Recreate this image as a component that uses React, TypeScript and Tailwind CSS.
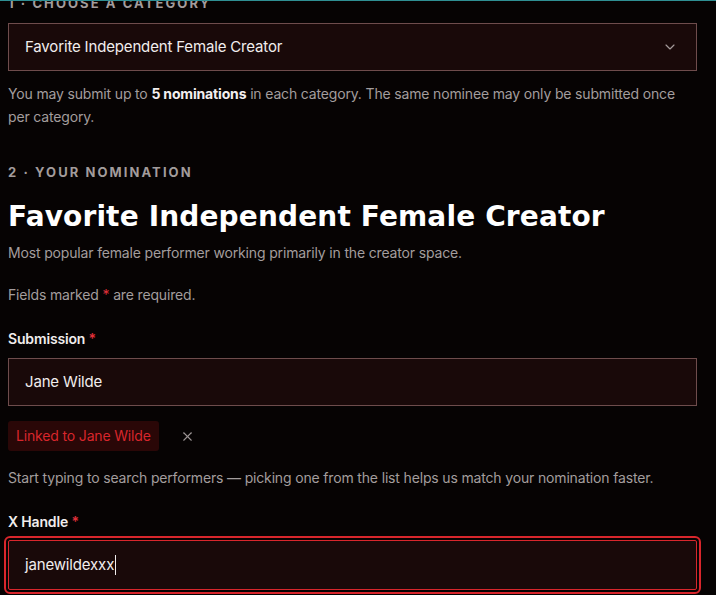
import { ChevronDown, X } from "lucide-react";

const body = { fontFamily: "Inter, 'Noto Sans', sans-serif" };

const App = () => {
  return (
    <div
      className="min-h-[595px] w-[716px] overflow-hidden border-t border-[#2f8f93] bg-[#060303] tracking-[-0.01em] text-[#e8e4e4]"
      style={body}
    >
      <div className="ml-2 w-[689px]">
        <p className="-mt-[8px] text-[13px] font-bold uppercase leading-5 tracking-[0.16em] text-[#a29c9c]">
          1 · Choose a category
        </p>

        <button className="mt-[10px] flex h-[48px] w-full items-center justify-between border border-[#6e4c4c] bg-[#190909] pl-[16px] pr-[18px] text-left text-[15px] text-[#f1eded]">
          <span>Favorite Independent Female Creator</span>
          <ChevronDown className="h-4 w-4 text-[#a49a9a]" strokeWidth={1.75} />
        </button>

        <p className="mt-[11px] text-[14px] leading-[23px] text-[#a39d9d]">
          You may submit up to <span className="font-bold text-[#f3efef]">5 nominations</span> in each category. The same
          nominee may only be submitted once per category.
        </p>

        <p className="mt-[34px] text-[13px] font-bold uppercase leading-5 tracking-[0.16em] text-[#a29c9c]">
          2 · Your nomination
        </p>

        <h1
          className="mt-[16px] text-[28px] font-bold leading-[38px] tracking-[0.005em] text-white"
          style={{ fontFamily: "'DejaVu Sans', sans-serif" }}
        >
          Favorite Independent Female Creator
        </h1>

        <p className="mt-[6px] text-[14px] leading-[22px] text-[#a39d9d]">
          Most popular female performer working primarily in the creator space.
        </p>

        <p className="mt-[20px] text-[14px] leading-[22px] text-[#a39d9d]">
          Fields marked <span className="text-[#e0303a]">*</span> are required.
        </p>

        <label className="mt-[22px] block text-[14px] font-semibold leading-[22px] text-[#f1eded]">
          Submission <span className="text-[#e0303a]">*</span>
        </label>

        <div className="mt-[8px] flex h-[48px] w-full items-center border border-[#6e4c4c] bg-[#190909] px-[16px] text-[15px] text-[#f1eded]">
          Jane Wilde
        </div>

        <div className="mt-[15px] flex items-center gap-[21px]">
          <span className="rounded-[3px] bg-[#2a0707] px-[8px] py-[5px] text-[14px] leading-5 text-[#d8262c]">
            Linked to Jane Wilde
          </span>
          <X className="h-[15px] w-[15px] text-[#9b9494]" strokeWidth={1.75} />
        </div>

        <p className="mt-[16px] text-[14px] leading-[22px] text-[#a39d9d]">
          Start typing to search performers — picking one from the list helps us match your nomination faster.
        </p>

        <label className="mt-[22px] block text-[14px] font-semibold leading-[22px] text-[#f1eded]">
          X Handle <span className="text-[#e0303a]">*</span>
        </label>

        <div className="mt-[7px] flex h-[50px] w-full items-center rounded-[2px] border border-[#d8262c] bg-[#190909] px-[16px] text-[15px] text-[#f1eded] outline-2 outline-offset-2 outline-[#d8262c] outline-solid">
          janewildexxx
          <span className="ml-[1px] h-[20px] w-px bg-[#f1eded]" />
        </div>
      </div>
    </div>
  );
};

export default App;
